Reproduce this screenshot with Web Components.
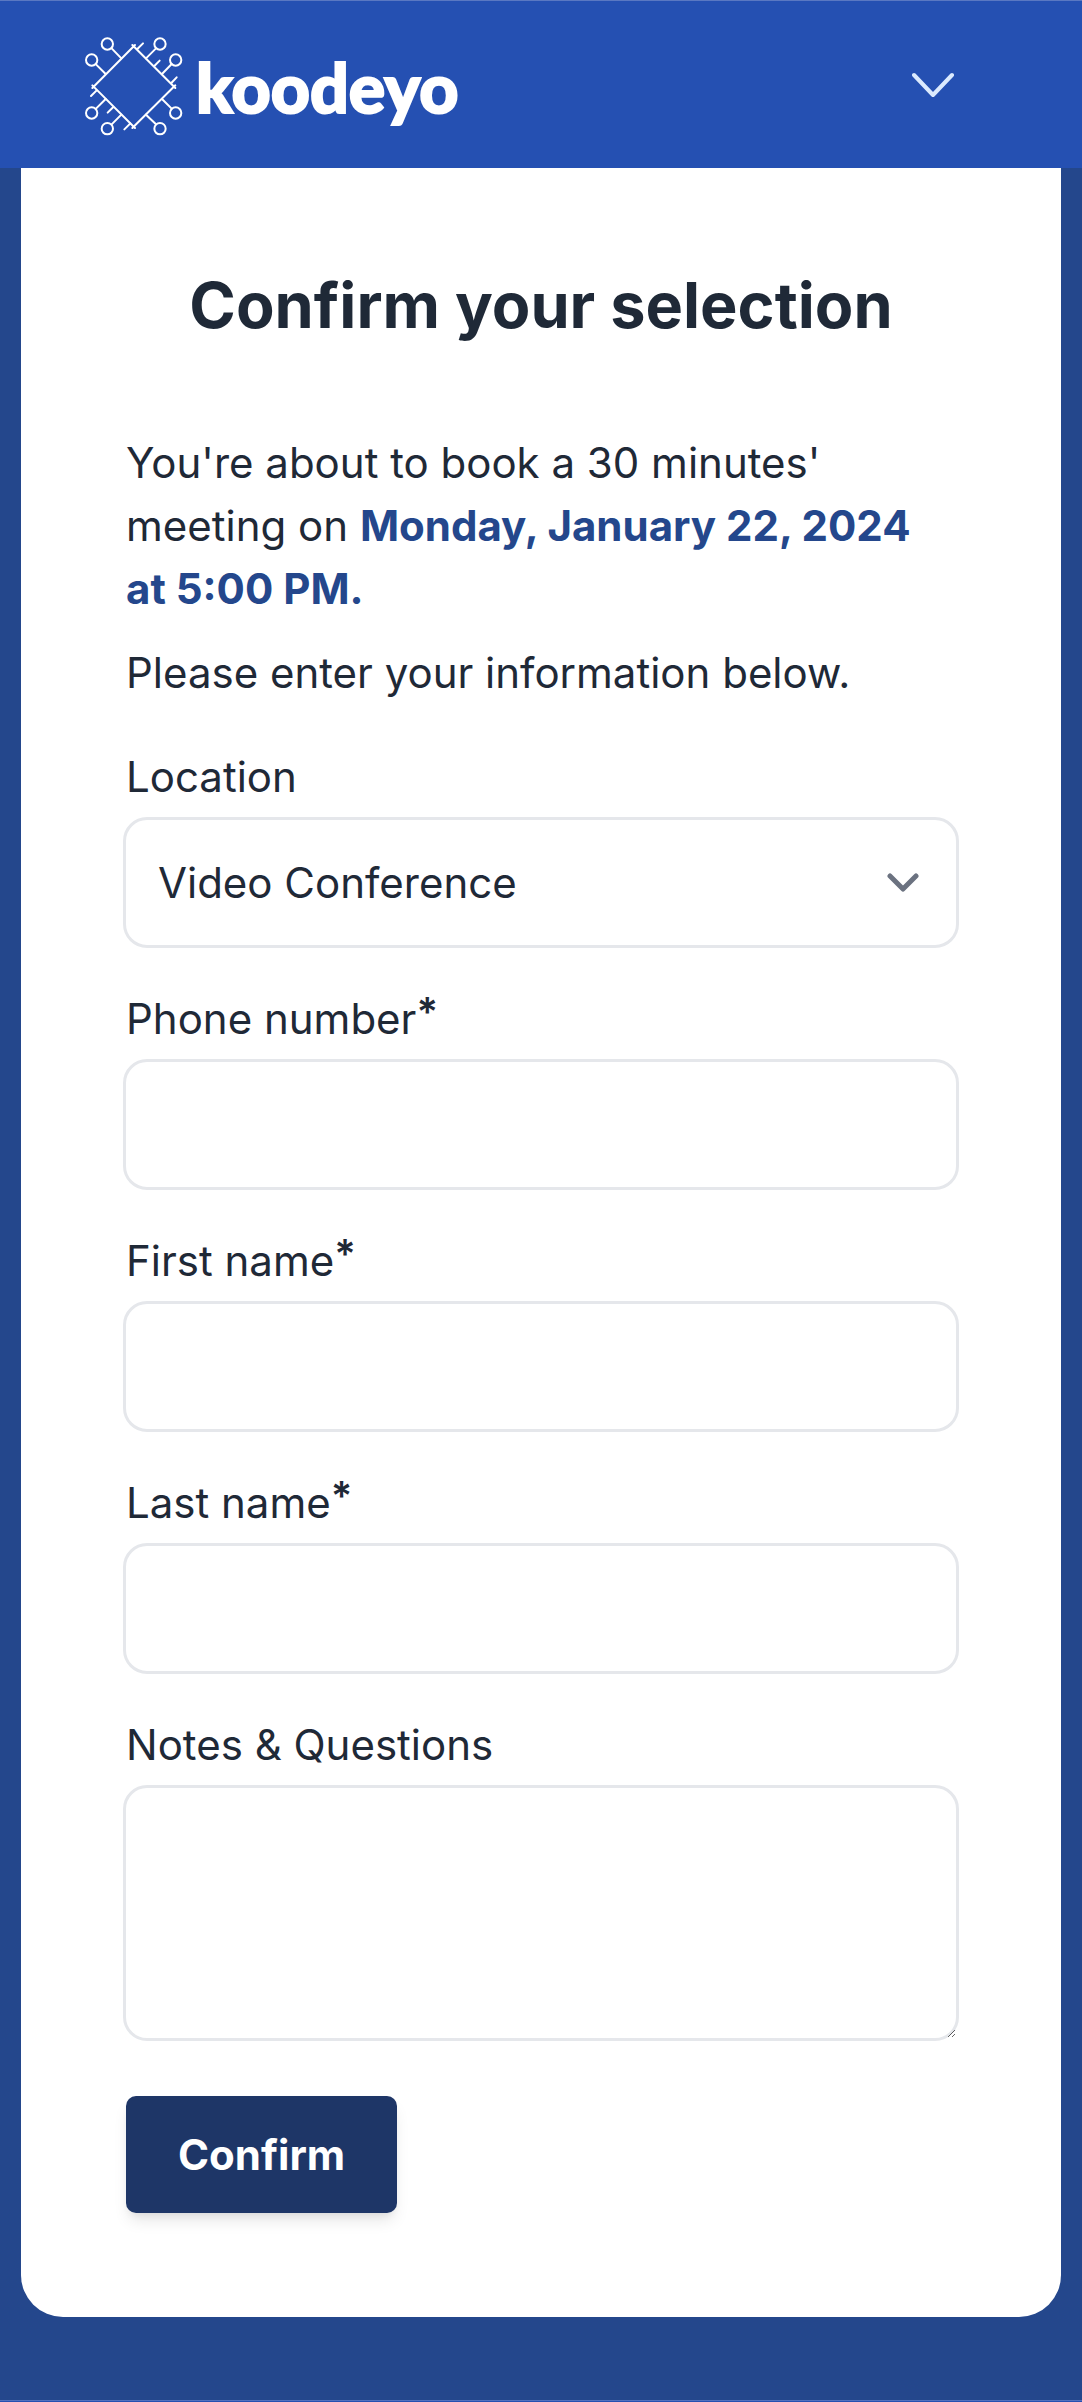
<!DOCTYPE html>
<html lang="en">
<head>
<meta charset="utf-8">
<meta name="viewport" content="width=device-width, initial-scale=1">
<title>Confirm your selection</title>
<style>
  html { background: #24478c; }
  body {
    margin: 0;
    font-family: Inter, "Liberation Sans", sans-serif;
    font-size: 42px;
    line-height: 63px;
    font-optical-sizing: none;
    font-variation-settings: "opsz" 14;
    color: #1f2937;
  }
</style>
</head>
<body>
<booking-page>
  <site-header slot="header"></site-header>
  <booking-card heading="Confirm your selection">
    <booking-summary>
      <p>You're about to book a 30 minutes' meeting on <strong>Monday, January 22, 2024 at 5:00 PM.</strong></p>
      <p>Please enter your information below.</p>
    </booking-summary>
    <form-field label="Location" kind="select" value="Video Conference"></form-field>
    <form-field label="Phone number" kind="tel" required></form-field>
    <form-field label="First name" kind="text" required></form-field>
    <form-field label="Last name" kind="text" required></form-field>
    <form-field label="Notes &amp; Questions" kind="textarea"></form-field>
    <primary-button slot="actions">Confirm</primary-button>
  </booking-card>
</booking-page>

<script>
  const attach = (el, html) => {
    const t = document.createElement('template');
    t.innerHTML = html;
    el.attachShadow({ mode: 'open' }).append(t.content.cloneNode(true));
  };

  customElements.define('booking-page', class extends HTMLElement {
    connectedCallback() {
      attach(this, `
        <style>
          :host { display: flex; flex-direction: column; min-height: 100vh; background: #24478c; }
          main { flex: 1; padding: 0 21px 80px; }
          footer { height: 1px; border-top: 1px solid #5270bd; background: #2550b2; }
        </style>
        <slot name="header"></slot>
        <main><slot></slot></main>
        <footer></footer>`);
    }
  });

  customElements.define('site-header', class extends HTMLElement {
    connectedCallback() {
      attach(this, `
        <style>
          :host { display: block; background: #2550b2; }
          header {
            display: flex; align-items: center; justify-content: space-between;
            box-sizing: border-box; height: 168px; padding: 0 105px 0 85px;
            border-top: 1px solid #5a78c2;
          }
          button {
            display: flex; padding: 21px; border: 0; background: none; color: #dbeafe; cursor: pointer;
          }
        </style>
        <header>
          <brand-logo></brand-logo>
          <button type="button" aria-label="Open menu">
            <svg width="44" height="26" viewBox="0 0 44 26" fill="none" stroke="currentColor" stroke-width="4" stroke-linecap="round" stroke-linejoin="round"><path d="M2 3 21 23 40 3"/></svg>
          </button>
        </header>`);
    }
  });

  customElements.define('brand-logo', class extends HTMLElement {
    connectedCallback() {
      attach(this, `
        <style>
          :host { display: block; padding-top: 4px; }
          a { display: flex; align-items: center; gap: 12px; color: #fff; text-decoration: none;
              font-size: 68px; line-height: 84px; font-weight: 900; font-family: Lato, sans-serif;
              -webkit-text-stroke: 2px #fff; }
          svg { flex: none; }
        </style>
        <a href="#">
          <svg width="99" height="99" viewBox="27 32 297 297" fill="none" stroke="#fff" stroke-width="6" stroke-linecap="round">
            <path d="M169 56 298 185M177 56 49 185M49 177 177 305M298 177 169 305"/>
            <circle cx="94" cy="53" r="17"/><circle cx="252" cy="53" r="17"/>
            <circle cx="299" cy="101" r="17"/><circle cx="47" cy="101" r="17"/>
            <circle cx="47" cy="260" r="17"/><circle cx="94" cy="307" r="17"/>
            <circle cx="252" cy="307" r="17"/><circle cx="299" cy="260" r="17"/>
            <path d="M107 66 136 96M60 114 89 143M240 66 210 96M287 113 258 143M60 247 89 218M107 294 136 265M240 294 210 265M287 247 258 218"/>
            <path d="M184 68 201 51M235 119 251 103M286 170 302 153M62 192 45 209M112 242 95 259M163 291 145 309"/>
          </svg>
          <span>koodeyo</span>
        </a>`);
    }
  });

  customElements.define('booking-card', class extends HTMLElement {
    connectedCallback() {
      attach(this, `
        <style>
          :host { display: block; background: #fff; border-radius: 0 0 42px 42px; }
          section { padding: 90px 105px 104px; }
          h1 { margin: 0 0 79px; font-size: 63px; line-height: 94px; font-weight: 700; text-align: center; }
          form { display: flex; flex-direction: column; gap: 39px; }
          .actions { display: flex; padding-top: 16px; }
        </style>
        <section>
          <h1></h1>
          <form>
            <slot></slot>
            <div class="actions"><slot name="actions"></slot></div>
          </form>
        </section>`);
      this.shadowRoot.querySelector('h1').textContent = this.getAttribute('heading');
    }
  });

  customElements.define('booking-summary', class extends HTMLElement {
    connectedCallback() {
      attach(this, `
        <style>
          :host { display: flex; flex-direction: column; gap: 21px; padding-bottom: 2px; }
          ::slotted(p) { margin: 0; }
        </style>
        <slot></slot>`);
      const strong = this.querySelector('strong');
      strong.style.color = '#24478c';
      strong.style.fontWeight = '700';
    }
  });

  customElements.define('form-field', class extends HTMLElement {
    connectedCallback() {
      const kind = this.getAttribute('kind');
      const req = this.hasAttribute('required');
      const control = kind === 'select'
        ? '<select id="c"><option></option></select><svg width="32" height="20" viewBox="0 0 32 20" fill="none" stroke="#6b7280" stroke-width="5" stroke-linecap="round" stroke-linejoin="round"><path d="M3 3 16 16 29 3"/></svg>'
        : kind === 'textarea'
        ? '<textarea id="c"></textarea>'
        : `<input id="c" type="${kind}"${req ? ' required' : ''}>`;
      attach(this, `
        <style>
          :host { display: block; }
          label { display: block; margin-bottom: 9px; }
          sup { font-size: 40px; line-height: 0; font-weight: 600; vertical-align: 8px; }
          .box { display: grid; align-items: center; margin: 0 -3px; }
          select, input, textarea {
            grid-area: 1 / 1; box-sizing: border-box; width: 100%; height: 131px; margin: 0;
            padding: 0 32px; border: 3px solid #e5e7eb; border-radius: 24px;
            background: #fff; color: inherit; font: inherit; font-variation-settings: inherit;
            appearance: none; outline: none;
          }
          textarea { height: 256px; padding: 21px 32px; resize: vertical; }
          input:focus, select:focus, textarea:focus { border-color: #24478c; }
          svg { grid-area: 1 / 1; justify-self: end; margin-right: 40px; pointer-events: none; }
        </style>
        <label for="c"><span></span>${req ? '<sup>*</sup>' : ''}</label>
        <div class="box">${control}</div>`);
      this.shadowRoot.querySelector('span').textContent = this.getAttribute('label');
      const opt = this.shadowRoot.querySelector('option');
      if (opt) opt.textContent = this.getAttribute('value');
    }
  });

  customElements.define('primary-button', class extends HTMLElement {
    connectedCallback() {
      attach(this, `
        <style>
          :host { display: block; }
          button {
            display: block; padding: 27px 52px; border: 0; border-radius: 10px; background: #1e3667; color: #fff;
            font: inherit; font-variation-settings: inherit; font-weight: 700; cursor: pointer;
            box-shadow: 0 10px 16px -3px rgba(0,0,0,.1), 0 5px 10px -5px rgba(0,0,0,.1);
          }
        </style>
        <button type="submit"><slot></slot></button>`);
    }
  });
</script>
</body>
</html>
